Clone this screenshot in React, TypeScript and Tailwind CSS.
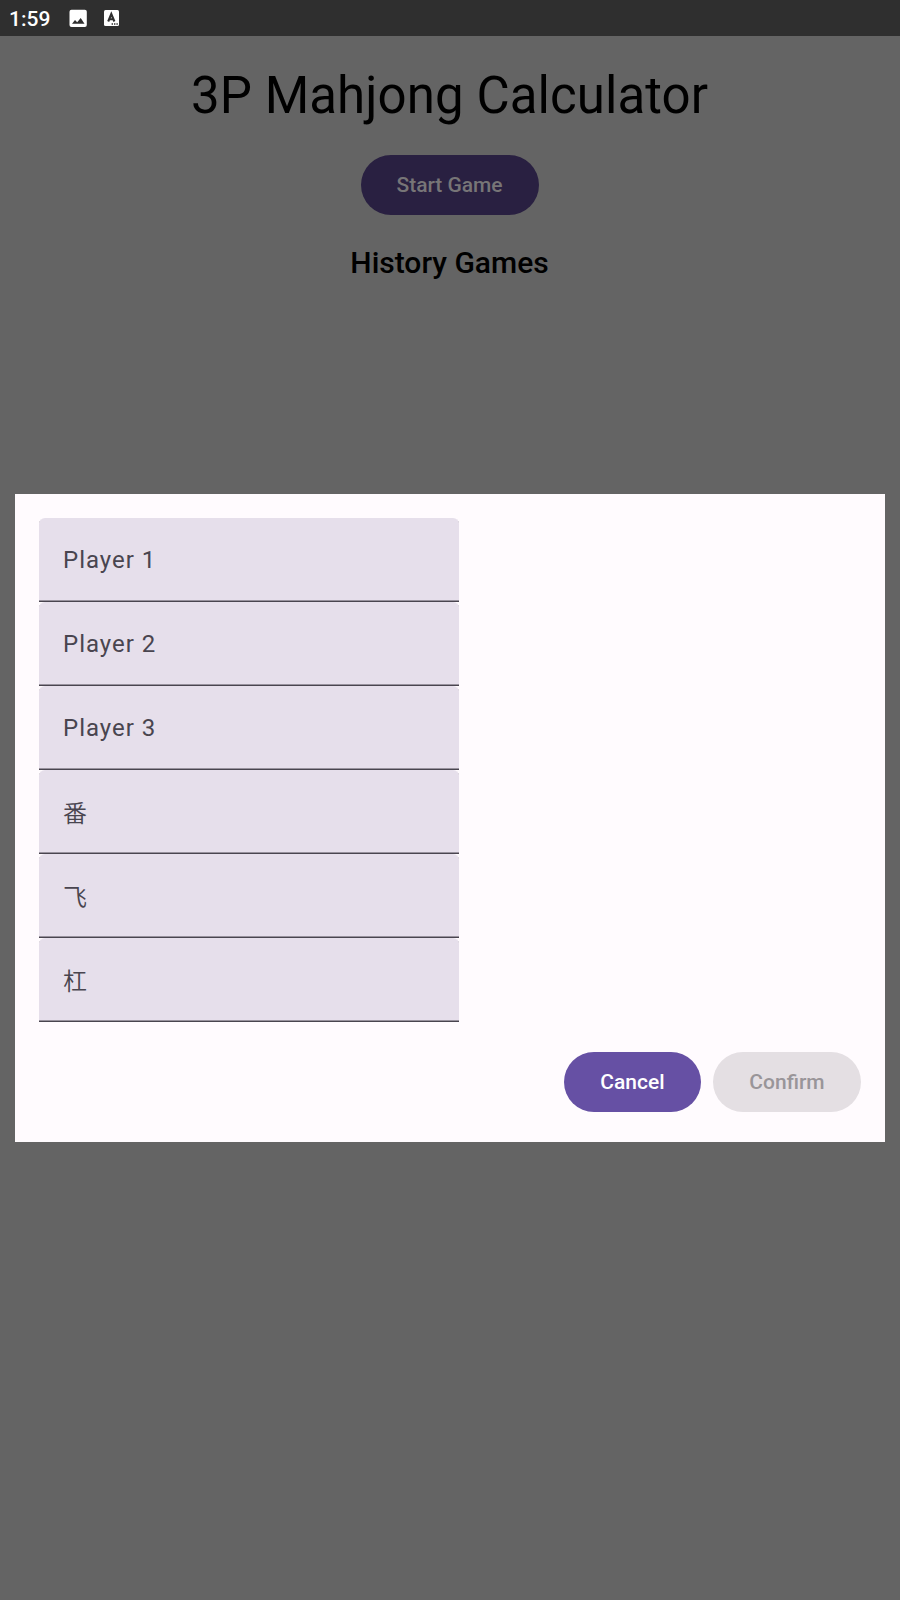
const fields = ["Player 1", "Player 2", "Player 3", "番", "飞", "杠"];

function StatusBar() {
  return (
    <div className="flex h-9 items-center bg-[#2f2f2f] pl-[9px] text-white">
      <span className="w-[42px] pt-[2px] text-[21px] leading-[34px] font-medium whitespace-nowrap">1:59</span>
      <svg className="ml-[18px] h-[18px] w-[18px]" viewBox="0 0 18 18">
        <rect x="0.500" y="0.700" width="17.300" height="17.300" rx="2" fill="currentColor" />
        <path d="M3 14.700 6 11l2.200 2.300L11.700 9 15.500 14.700z" fill="#2f2f2f" />
      </svg>
      <svg className="ml-[17px] h-4 w-[15px]" viewBox="0 0 15 16">
        <rect width="15" height="16" rx="1.500" fill="currentColor" />
        <path d="M4.200 11.500 7.300 4l3.100 7.500M5.300 9.300h4" fill="none" stroke="#2f2f2f" strokeWidth="2.100" />
        <path d="M7.600 14h1.400M10 14h1.400M12.400 14h1.400" stroke="#2f2f2f" strokeWidth="1.400" />
      </svg>
    </div>
  );
}

export default function App() {
  return (
    <div className="h-[1600px] w-[900px] overflow-hidden bg-[#646464] font-[Roboto,'Noto_Sans_CJK_SC',sans-serif] text-black">
      <StatusBar />
      <div className="flex h-[458px] flex-col items-center">
        <h1 className="mt-[27px] pr-px text-[51px] leading-[66px] tracking-[0.08px] whitespace-nowrap">3P Mahjong Calculator</h1>
        <button className="mt-[26px] h-[60px] w-[178px] rounded-full bg-[#292041] pt-[2px] pr-px text-[21px] font-medium tracking-[-0.05px] text-[#777577]">
          Start Game
        </button>
        <h2 className="mt-[28px] pr-px text-[30px] leading-[40px] font-medium">History Games</h2>
      </div>
      <div className="mx-[15px] h-[648px] bg-[#fffbfe] px-6 pt-6">
        <div className="w-[420px]">
          {fields.map((f, i) => (
            <div
              key={f}
              className="flex h-[84px] items-center rounded-t-[6px] bg-[#e6dfeb] pl-6 text-[24px] text-[#49454f] shadow-[inset_0_-1px_0_#49454f,inset_0_-2px_0_#98929d]"
            >
              <span className={i < 3 ? "tracking-[1px]" : "pt-[4px] font-[350]"}>{f}</span>
            </div>
          ))}
        </div>
        <div className="mt-[30px] flex justify-end gap-3">
          <button className="h-[60px] w-[137px] rounded-full bg-[#6650a4] pt-[2px] text-[21px] font-medium text-white">Cancel</button>
          <button className="h-[60px] w-[148px] rounded-full bg-[#e4dfe3] pt-[2px] text-[21px] font-medium text-[#999599]">Confirm</button>
        </div>
      </div>
    </div>
  );
}
